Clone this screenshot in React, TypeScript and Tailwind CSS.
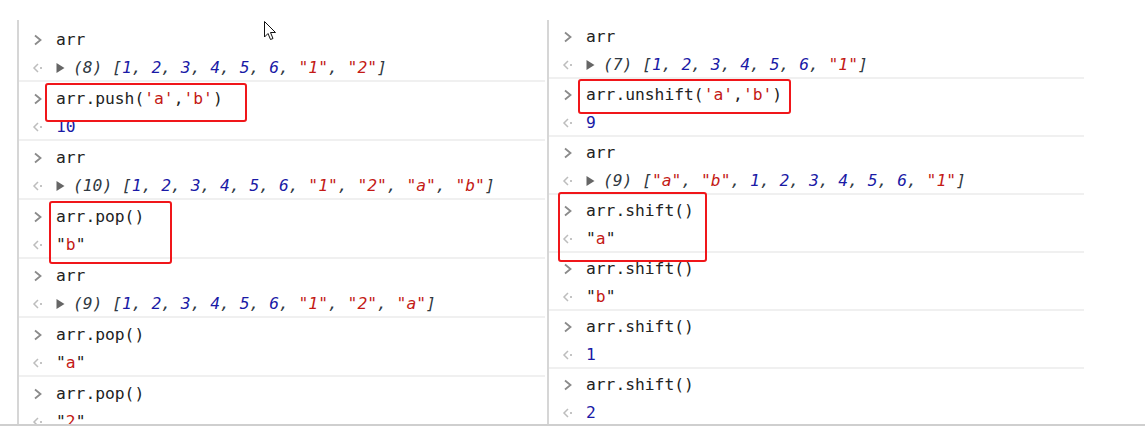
import React from "react";

type Tok = { t: string; c?: "n" | "s" | "d" };

const Prompt = () => (
  <svg width="10" height="12" viewBox="0 0 10 12" className="shrink-0">
    <path d="M2 1.5 L7.5 6 L2 10.5" fill="none" stroke="#8a8a8a" strokeWidth="1.8" />
  </svg>
);

const Result = () => (
  <svg width="12" height="12" viewBox="0 0 12 12" className="shrink-0">
    <path d="M6 2 L2 6 L6 10" fill="none" stroke="#bdbdbd" strokeWidth="1.5" />
    <rect x="8" y="5" width="2" height="2" fill="#c4c4c4" />
  </svg>
);

const Tri = () => (
  <svg width="9" height="12" viewBox="0 0 9 12" className="shrink-0 block">
    <path d="M0.5 1 L8.5 6 L0.5 11 Z" fill="#666666" />
  </svg>
);

const color = (c?: string) =>
  c === "n" ? "text-[#1a1aa6]" : c === "s" ? "text-[#c41a16]" : "text-[#303942]";

function Input({ code }: { code: Tok[] }) {
  return (
    <div className="h-[28px] pt-[4px] flex items-center">
      <div className="w-[37px] pl-[14px] flex items-center">
        <Prompt />
      </div>
      <span className="whitespace-pre text-[#222]">
        {code.map((k, i) => (
          <span key={i} className={k.c === "s" ? "text-[#c41a16]" : ""}>
            {k.t}
          </span>
        ))}
      </span>
    </div>
  );
}

function Output({ children }: { children: React.ReactNode }) {
  return (
    <div className="h-[28px] pt-[4px] flex items-center">
      <div className="w-[37px] pl-[13px] flex items-center">
        <Result />
      </div>
      {children}
    </div>
  );
}

function ArrOut({ n, items }: { n: number; items: Tok[] }) {
  return (
    <Output>
      <div className="w-[17px] shrink-0 flex items-center">
        <Tri />
      </div>
      <span className="italic whitespace-pre text-[#303942]">
        {`(${n}) [`}
        {items.map((k, i) => (
          <React.Fragment key={i}>
            <span className={color(k.c)}>{k.t}</span>
            {i < items.length - 1 ? ", " : ""}
          </React.Fragment>
        ))}
        {"]"}
      </span>
    </Output>
  );
}

function StrOut({ s }: { s: string }) {
  return (
    <Output>
      <span className="whitespace-pre text-[#222]">
        "<span className="text-[#c41a16]">{s}</span>"
      </span>
    </Output>
  );
}

function NumOut({ v }: { v: string }) {
  return (
    <Output>
      <span className="text-[#1a1aa6]">{v}</span>
    </Output>
  );
}

const nums = (arr: (number | string)[]): Tok[] =>
  arr.map((x) => (typeof x === "number" ? { t: String(x), c: "n" } : { t: `"${x}"`, c: "s" }));

const arrIn: Tok[] = [{ t: "arr" }];
const popIn: Tok[] = [{ t: "arr.pop()" }];
const shiftIn: Tok[] = [{ t: "arr.shift()" }];

function Group({ first, pt, children }: { first?: boolean; pt: string; children: React.ReactNode }) {
  return (
    <div className={`${first ? "" : "border-t-2 border-[#f0f0f0]"} ${pt}`}>{children}</div>
  );
}

export default function App() {
  return (
    <div
      className="relative w-[1145px] h-[426px] bg-white overflow-hidden flex flex-col text-[16.3px]"
      style={{ fontFamily: '"DejaVu Sans Mono", "Liberation Mono", monospace' }}
    >
      <div className="flex-1 flex pt-[20px] pl-[17px] overflow-hidden">
        {/* left panel */}
        <div className="w-[528px] border-l-2 border-[#d6d6d6] pt-[3px]">
          <Group first pt="pt-[1px]">
            <Input code={arrIn} />
            <ArrOut n={8} items={nums([1, 2, 3, 4, 5, 6, "1", "2"])} />
          </Group>
          <Group pt="pt-[1px]">
            <Input code={[{ t: "arr.push(" }, { t: "'a'", c: "s" }, { t: "," }, { t: "'b'", c: "s" }, { t: ")" }]} />
            <NumOut v="10" />
          </Group>
          <Group pt="pt-[1px]">
            <Input code={arrIn} />
            <ArrOut n={10} items={nums([1, 2, 3, 4, 5, 6, "1", "2", "a", "b"])} />
          </Group>
          <Group pt="pt-[1px]">
            <Input code={popIn} />
            <StrOut s="b" />
          </Group>
          <Group pt="pt-[1px]">
            <Input code={arrIn} />
            <ArrOut n={9} items={nums([1, 2, 3, 4, 5, 6, "1", "2", "a"])} />
          </Group>
          <Group pt="pt-[1px]">
            <Input code={popIn} />
            <StrOut s="a" />
          </Group>
          <Group pt="pt-[1px]">
            <Input code={popIn} />
            <StrOut s="2" />
          </Group>
        </div>
        {/* right panel */}
        <div className="ml-[2px] w-[537px] border-l-2 border-[#d6d6d6]">
          <Group first pt="pt-[1px]">
            <Input code={arrIn} />
            <ArrOut n={7} items={nums([1, 2, 3, 4, 5, 6, "1"])} />
          </Group>
          <Group pt="pt-[0px]">
            <Input code={[{ t: "arr.unshift(" }, { t: "'a'", c: "s" }, { t: "," }, { t: "'b'", c: "s" }, { t: ")" }]} />
            <NumOut v="9" />
          </Group>
          <Group pt="pt-[0px]">
            <Input code={arrIn} />
            <ArrOut n={9} items={nums(["a", "b", 1, 2, 3, 4, 5, 6, "1"])} />
          </Group>
          <Group pt="pt-[0px]">
            <Input code={shiftIn} />
            <StrOut s="a" />
          </Group>
          <Group pt="pt-[0px]">
            <Input code={shiftIn} />
            <StrOut s="b" />
          </Group>
          <Group pt="pt-[0px]">
            <Input code={shiftIn} />
            <NumOut v="1" />
          </Group>
          <Group pt="pt-[0px]">
            <Input code={shiftIn} />
            <NumOut v="2" />
          </Group>
        </div>
      </div>
      <div className="h-[2px] bg-[#cfcfcf] shrink-0" />

      {/* red annotation boxes */}
      <div className="absolute left-[45px] top-[83px] w-[202px] h-[39px] border-2 border-[#f0161a] rounded-[3px]" />
      <div className="absolute left-[49px] top-[201px] w-[123px] h-[63px] border-2 border-[#f0161a] rounded-[3px]" />
      <div className="absolute left-[578px] top-[79px] w-[213px] h-[35px] border-2 border-[#f0161a] rounded-[3px]" />
      <div className="absolute left-[558px] top-[192px] w-[149px] h-[70px] border-2 border-[#f0161a] rounded-[3px]" />

      {/* mouse cursor */}
      <svg className="absolute left-[264px] top-[21px]" width="13" height="20" viewBox="0 0 13 20">
        <path
          d="M0.5 0.5 L0.5 16 L4 12.5 L6.5 18.5 L9 17.5 L6.5 11.5 L11.5 11.5 Z"
          fill="#fff"
          stroke="#111"
          strokeWidth="1"
          strokeLinejoin="round"
        />
      </svg>
    </div>
  );
}
